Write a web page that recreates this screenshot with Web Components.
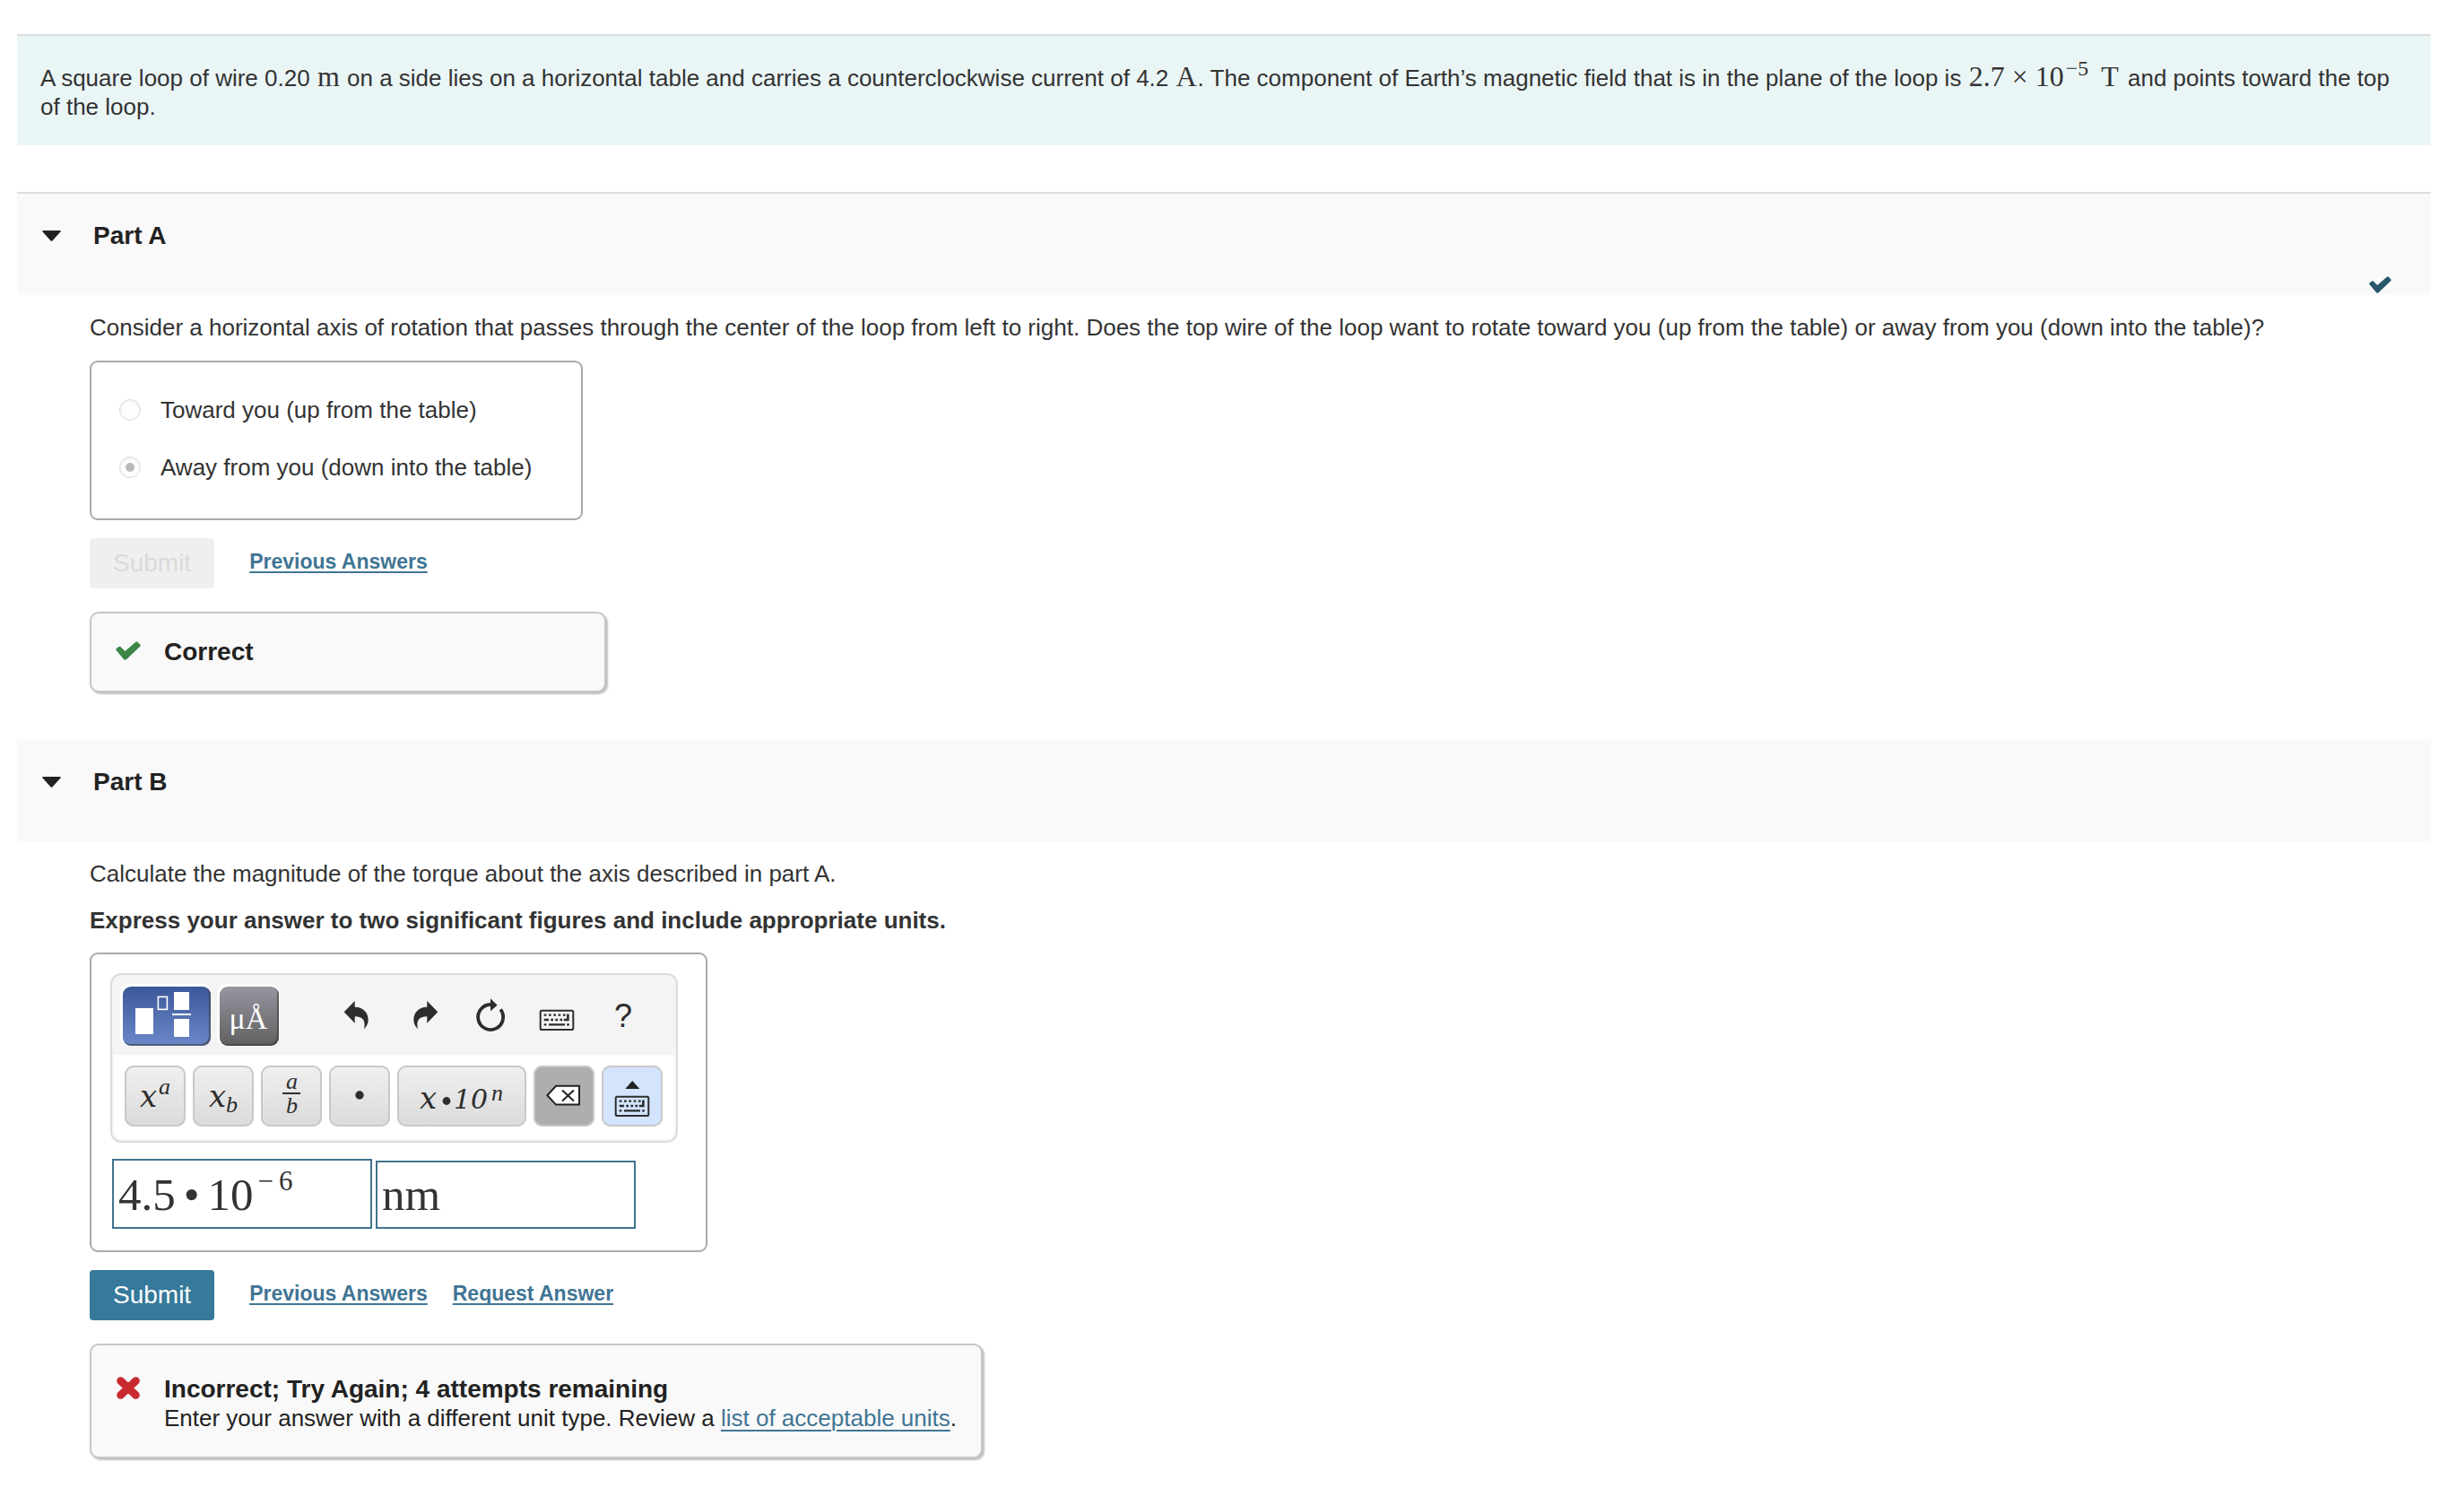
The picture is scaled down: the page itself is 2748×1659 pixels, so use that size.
<!DOCTYPE html>
<html lang="en">
<head>
<meta charset="utf-8">
<title>Torque on a square loop</title>
<style>
  body {
    margin: 0;
    padding: 38px 37px 24px 19px;
    background: #fff;
    color: #333;
    font: 26px/32px "Liberation Sans", Arial, sans-serif;
  }
  p {
    margin: 0;
  }
  p.instructions {
    margin-top: 20px;
    font-weight: bold;
  }
  a {
    color: #3f7594;
    text-decoration-thickness: 2px;
    text-underline-offset: 4px;
  }
</style>
</head>
<body>

<problem-intro>
  A square loop of wire 0.20 <math-text>m</math-text> on a side lies on a horizontal table and carries a counterclockwise current of 4.2 <math-text>A</math-text>. The component of Earth’s magnetic field that is in the plane of the loop is <math-text>2.7 × 10<sup slot="power">−5</sup><span slot="unit">T</span></math-text> and points toward the top <span>of the loop.</span>
</problem-intro>

<problem-part label="Part A" first done>
  <p>Consider a horizontal axis of rotation that passes through the center of the loop from left to right. Does the top wire of the loop want to rotate toward you (up from the table) or away from you (down into the table)?</p>
  <answer-box kind="choices">
    <choice-item>Toward you (up from the table)</choice-item>
    <choice-item checked>Away from you (down into the table)</choice-item>
  </answer-box>
  <submit-row disabled>
    <action-link>Previous Answers</action-link>
  </submit-row>
  <feedback-box status="correct">Correct</feedback-box>
</problem-part>

<problem-part label="Part B">
  <p>Calculate the magnitude of the torque about the axis described in part A.</p>
  <p class="instructions">Express your answer to two significant figures and include appropriate units.</p>
  <answer-box kind="math">
    <math-toolbar></math-toolbar>
    <math-fields></math-fields>
  </answer-box>
  <submit-row>
    <action-link>Previous Answers</action-link>
    <action-link>Request Answer</action-link>
  </submit-row>
  <feedback-box status="incorrect">Incorrect; Try Again; 4 attempts remaining
    <span slot="detail">Enter your answer with a different unit type. Review a <a href="#units">list of acceptable units</a>.</span>
  </feedback-box>
</problem-part>

<script>
const define = (name, render, ready) => {
  window.customElements.define(
    name,
    class extends HTMLElement {
      constructor() {
        super();
        this.root = this.attachShadow({ mode: "open" });
      }

      connectedCallback() {
        // Trimmed, so that inline elements get no space after them
        this.root.innerHTML = render(this).trim();
        if (ready) ready(this.root, this);
      }
    }
  );
};

const checkMark = (width, height, color) => `
  <svg width="${width}" height="${height}" viewBox="0 0 28 21" preserveAspectRatio="none" aria-hidden="true">
    <path d="M0.4 9.8 Q0 8.8 0.9 8 L3.6 6 Q4.6 5.4 5.6 6.2 L10.4 11 L22.4 0.7 Q23.6 -0.2 24.6 0.9 L27.2 3.6 Q28.2 4.8 27.2 5.8 L12.2 20 Q10.6 21.4 9 20Z" fill="${color}"/>
  </svg>`;

const crossMark = `
  <svg width="28" height="27" viewBox="0 0 28 27" aria-hidden="true">
    <path d="M5.5 5.5 L22.5 21.5 M22.5 5.5 L5.5 21.5" stroke="#c82b2f" stroke-width="8.6" stroke-linecap="round"/>
  </svg>`;

// Keyboard glyph, drawn at its place in a toolbar cell
const keyboard = `
  <rect x="20.7" y="26.7" width="36.6" height="21.3" rx="1.6" fill="none" stroke="#2d2d2d" stroke-width="2"/>
  <path d="M24.7 31.7h2.7M30 31.7h2.7M35.3 31.7h2.7M40.6 31.7h2.7M45.9 31.7h2.7M24.7 37h5.3M32.3 37h2.7M37.4 37h2.7M42.4 37h2.7M24.7 42.3h2.7M30 42.3h18M50.2 42.3h2.7" stroke="#2d2d2d" stroke-width="2.3"/>
  <path d="M51.4 30.4V37H46.8" fill="none" stroke="#2d2d2d" stroke-width="2.6"/>`;

const backArrow = `M23.7 28.3 L35.7 16 V22.7 C45 22.7 50.7 29 50.7 37 C50.7 41 49 44.5 46 47.3 C48 38 45 33.3 35.7 33.3 V40.7Z`;

define("math-text", () => `
  <style>
    :host {
      margin: 0 1px;
      font-family: "Liberation Serif", "Times New Roman", serif;
      font-size: 32px;
      line-height: 0;
      white-space: nowrap;
    }
    ::slotted(sup) {
      margin-left: 2px;
      font-size: 24px;
      vertical-align: 12px;
      line-height: 0;
    }
    ::slotted(span) {
      margin: 0 2px 0 14px;
    }
  </style><slot></slot><slot name="power"></slot><slot name="unit"></slot>
`);

define("problem-intro", () => `
  <style>
    :host {
      display: block;
      padding: 31px 44px 27px 26px;
      border-top: 2px solid #dcdfdf;
      background: #eaf6f6;
    }
  </style>
  <slot></slot>
`);

define("problem-part", (el) => `
  <style>
    :host {
      display: block;
      margin-top: 53px;
    }
    :host([first]) {
      margin-top: 52px;
    }
    header {
      display: flex;
      align-items: flex-start;
      justify-content: space-between;
      height: 113px;
      padding: 0 44px 0 28px;
      box-sizing: border-box;
      background: #f9f9f9;
    }
    :host([first]) header {
      height: 115px;
      border-top: 2px solid #dedede;
    }
    h2 {
      margin: 31px 0 0;
      font-size: 28px;
      line-height: 32px;
    }
    button {
      display: flex;
      align-items: center;
      gap: 36px;
      padding: 0;
      border: 0;
      background: none;
      color: #222;
      font: inherit;
    }
    .done {
      align-self: flex-end;
      display: flex;
      padding-bottom: 2px;
    }
    .body {
      padding: 20px 0 0 81px;
    }
  </style>
  <header>
    <h2><button type="button" aria-expanded="true">
      <svg width="21" height="12" viewBox="0 0 21 12" aria-hidden="true"><path d="M1 0H20Q21.4 0.4 20.4 1.6L11.6 11.3Q10.5 12.4 9.4 11.3L0.6 1.6Q-0.4 0.4 1 0Z" fill="#222"/></svg>
      <span>${el.getAttribute("label")}</span>
    </button></h2>
    ${el.hasAttribute("done") ? `<span class="done">${checkMark(25, 19, "#28586c")}</span>` : ""}
  </header>
  <div class="body"><slot></slot></div>
`, (root) => {
  const toggle = root.querySelector("button");
  toggle.addEventListener("click", () => {
    const body = root.querySelector(".body");
    body.hidden = !body.hidden;
    toggle.setAttribute("aria-expanded", String(!body.hidden));
  });
});

define("answer-box", () => `
  <style>
    :host {
      display: flex;
      flex-direction: column;
      width: fit-content;
      margin-top: 20px;
      border: 2px solid #a9a9a9;
      border-radius: 9px;
    }
    :host([kind="choices"]) {
      gap: 32px;
      margin-top: 21px;
      padding: 37px 55px 41px 31px;
    }
    :host([kind="math"]) {
      gap: 18px;
      padding: 21px 31px 24px 21px;
    }
  </style>
  <slot></slot>
`);

define("choice-item", (el) => `
  <style>
    :host {
      display: block;
    }
    label {
      display: flex;
      align-items: center;
      gap: 22px;
    }
    input {
      appearance: none;
      display: grid;
      place-items: center;
      width: 24px;
      height: 24px;
      margin: 0;
      border: 1px solid #dcdcdc;
      border-radius: 50%;
      background: #fdfdfd;
      box-shadow: inset 0 1px 3px #e8e8e8;
    }
    input:checked::before {
      content: "";
      width: 10px;
      height: 10px;
      border-radius: 50%;
      background: #bbb;
    }
  </style>
  <label><input type="radio" name="direction" disabled ${el.hasAttribute("checked") ? "checked" : ""}><span><slot></slot></span></label>
`);

define("submit-row", (el) => `
  <style>
    :host {
      display: flex;
      align-items: center;
      margin-top: 20px;
    }
    button {
      height: 56px;
      padding: 0 26px;
      border: 0;
      border-radius: 4px;
      background: #36799a;
      color: #fff;
      font: inherit;
      font-size: 28px;
    }
    button:disabled {
      background: #efefef;
      color: #dadada;
    }
    .links {
      display: flex;
      gap: 28px;
      margin-left: 39px;
      padding-bottom: 6px;
    }
  </style>
  <button type="submit" ${el.hasAttribute("disabled") ? "disabled" : ""}>Submit</button>
  <div class="links"><slot></slot></div>
`);

define("action-link", () => `
  <style>
    :host {
      display: block;
    }
    a {
      color: #3f7594;
      font-size: 23px;
      font-weight: bold;
      text-decoration-thickness: 2px;
      text-underline-offset: 3px;
      text-decoration-skip-ink: none;
    }
  </style>
  <a href="#answers"><slot></slot></a>
`);

define("feedback-box", (el) => `
  <style>
    :host {
      display: flex;
      align-items: flex-start;
      gap: 26px;
      width: fit-content;
      min-width: 576px;
      box-sizing: border-box;
      margin-top: 26px;
      padding: 27px;
      border: 2px solid #c6c6c6;
      border-radius: 10px;
      background: #f9f9f9;
      box-shadow: 2px 2px 2px #c0c0c0;
      color: #222;
    }
    :host([status="incorrect"]) {
      padding-top: 33px;
    }
    .icon {
      display: flex;
      align-items: center;
      height: 29px;
    }
    strong {
      display: block;
      font-size: 28px;
    }
  </style>
  <span class="icon">${el.getAttribute("status") === "correct" ? checkMark(28, 21, "#3c8544") : crossMark}</span>
  <div role="status"><strong><slot></slot></strong><slot name="detail"></slot></div>
`);

define("math-toolbar", () => `
  <style>
    :host {
      display: block;
      border: 2px solid #dcdcdc;
      border-radius: 12px;
      background: #f4f4f4;
    }
    .tools, .palette {
      display: flex;
    }
    .tools {
      padding: 13px 24px 10px 12px;
    }
    .palette {
      gap: 8px;
      margin: 0 2px 2px;
      padding: 12px 12px 14px;
      border-radius: 0 0 8px 8px;
      background: #fff;
    }
    button {
      display: flex;
      padding: 0;
      border: 0;
      background: none;
    }
    svg {
      display: block;
    }
    .tab {
      border-radius: 9px;
      box-shadow: inset -2px -2px 1px rgba(60, 60, 60, 0.6), -1px -1px 0 2px #fff;
    }
    .templates {
      background: linear-gradient(#3b5898, #6c88ca);
    }
    .symbols {
      margin: 0 49px 0 10px;
      background: linear-gradient(#9795a0, #606060);
    }
    .key {
      border-radius: 10px;
      background: linear-gradient(#f0f0f0, #dadada);
      box-shadow: inset 0 0 0 2px #c8c8c8;
    }
    .delete {
      background: #aeaeae;
    }
    .pad {
      background: #d3e4fc;
    }
    .serif {
      font-family: "Liberation Serif", serif;
    }
    .math {
      font-family: "DejaVu Serif", serif;
      font-style: italic;
    }
    .script {
      font-family: "Liberation Serif", serif;
      font-style: italic;
      font-size: 26px;
    }
  </style>
  <div class="tools" role="toolbar">
    <button class="tab templates" aria-label="Templates">
      <svg width="98" height="66"><path d="M14 24h20v29H14zM57 6h17v20H57zM55 30h21v2H55zM57 36h17v20H57z" fill="#fff"/><rect x="39.4" y="11.4" width="10" height="14" fill="none" stroke="#fff" stroke-width="1.6"/></svg>
    </button>
    <button class="tab symbols" aria-label="Symbols">
      <svg width="66" height="66"><text class="serif" x="32" y="47" font-size="34" text-anchor="middle" fill="#fff">μÅ</text></svg>
    </button>
    <button aria-label="undo"><svg width="74" height="66"><path d="${backArrow}" fill="#2d2d2d"/></svg></button>
    <button aria-label="redo"><svg width="74" height="66"><path d="${backArrow}" transform="translate(78) scale(-1 1)" fill="#2d2d2d"/></svg></button>
    <button aria-label="reset"><svg width="74" height="66"><path d="M39 20A14 14 0 1 0 50.2 25.4" fill="none" stroke="#2d2d2d" stroke-width="3.8"/><path d="M39 13.3L46.7 20.7L39 27.3Z" fill="#2d2d2d"/></svg></button>
    <button aria-label="keyboard shortcuts"><svg width="74" height="66">${keyboard}</svg></button>
    <button aria-label="help"><svg width="74" height="66"><text x="39" y="45" font-size="36" text-anchor="middle" fill="#2d2d2d">?</text></svg></button>
  </div>
  <div class="palette">
    <button class="key" aria-label="Superscript"><svg width="68" height="68" fill="#2d2d2d"><text class="math" x="17" y="46" font-size="34">x</text><text class="script" x="38" y="32">a</text></svg></button>
    <button class="key" aria-label="Subscript"><svg width="68" height="68" fill="#2d2d2d"><text class="math" x="18" y="46" font-size="34">x</text><text class="script" x="37" y="52">b</text></svg></button>
    <button class="key" aria-label="Fraction"><svg width="68" height="68" fill="#2d2d2d"><text class="script" x="28" y="26">a</text><path d="M24 30h20v2H24z"/><text class="script" x="28" y="53">b</text></svg></button>
    <button class="key" aria-label="Multiply"><svg width="68" height="68"><circle cx="34" cy="33" r="4.7" fill="#2d2d2d"/></svg></button>
    <button class="key" aria-label="Scientific notation"><svg width="144" height="68" fill="#2d2d2d"><text class="math" x="25" y="48" font-size="34">x</text><circle cx="55" cy="39.5" r="4.4"/><text class="math" x="63" y="48" font-size="30">10</text><text class="script" x="105" y="39">n</text></svg></button>
    <button class="key delete" aria-label="Backspace"><svg width="68" height="68" fill="none" stroke="#222" stroke-width="2"><path d="M15.4 33.2L25 22.8H51V43.6H25Z" fill="#fff"/><path d="M32 27.5L45 39.5M45 27.5L32 39.5"/></svg></button>
    <button class="key pad" aria-label="Keyboard"><svg width="68" height="68"><path d="M26.3 26L34.3 17L42.3 26Z" fill="#222"/><g transform="translate(-5 8)">${keyboard}</g></svg></button>
  </div>
`);

define("math-fields", () => `
  <style>
    :host {
      display: flex;
      align-items: flex-end;
      gap: 4px;
      margin-left: 2px;
      color: #333;
      font-family: "Liberation Serif", "Times New Roman", serif;
      font-size: 51px;
      line-height: 64px;
    }
    .value, input {
      box-sizing: border-box;
      width: 290px;
      border: 2px solid #42748e;
      border-radius: 0;
      background: #fff;
      outline: none;
    }
    .value {
      height: 78px;
      padding: 6px 5px 4px;
      white-space: nowrap;
    }
    input {
      height: 76px;
      padding: 0 5px;
      color: inherit;
      font: inherit;
    }
    .dot {
      margin: 0 9px;
    }
    sup {
      margin-left: 5px;
      font-size: 31px;
      line-height: 0;
      vertical-align: 22px;
    }
    .minus {
      margin-right: 6px;
    }
  </style>
  <div class="value" role="textbox" aria-label="Value" contenteditable="true" spellcheck="false">4.5<span class="dot">•</span>10<sup><span class="minus">−</span>6</sup></div>
  <input type="text" aria-label="Units" value="nm" spellcheck="false">
`);
</script>
</body>
</html>
